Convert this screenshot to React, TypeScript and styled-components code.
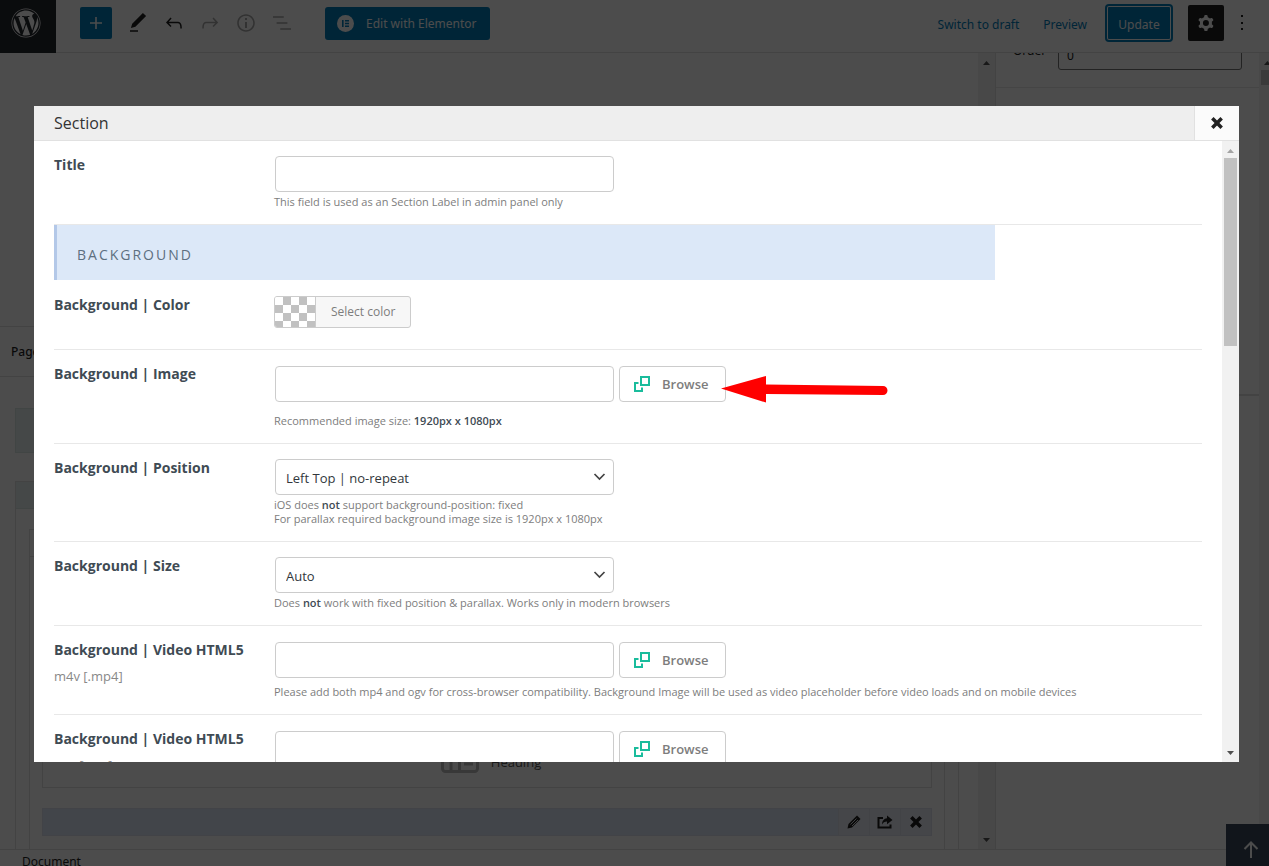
import React from "react";
import styled, { createGlobalStyle } from "styled-components";
import { FaWordpress } from "react-icons/fa";

const GlobalStyle = createGlobalStyle`
  *, *::before, *::after { box-sizing: border-box; }
  body {
    margin: 0;
    background: #fff;
    font-family: "Open Sans", "Noto Sans", sans-serif;
    font-size: 13px;
    color: #1e1e1e;
  }
  button, input, select { font-family: inherit; font-size: inherit; margin: 0; }
`;

const Editor = styled.div`
  position: relative;
  display: grid;
  grid-template-rows: 53px minmax(0, 1fr) 17px;
  height: 100vh;
  overflow: hidden;
  font-family: "Noto Sans", "Open Sans", sans-serif;
  font-size: 12px;
`;

/* ---------- top bar ---------- */

const TopBar = styled.header`
  display: flex;
  align-items: flex-start;
  border-bottom: 1px solid #e0e0e0;
`;

const HomeLink = styled.a`
  display: flex;
  justify-content: center;
  width: 56px;
  height: 53px;
  padding: 8px 4px 0 0;
  background: #23282d;
  color: #fff;
`;

const ToolGroup = styled.div`
  display: flex;
  align-items: center;
  height: 46px;
  padding-left: 24px;
`;

const ActionGroup = styled.div`
  display: flex;
  align-items: center;
  height: 46px;
  margin-left: auto;
  padding-right: 9px;
`;

const InsertButton = styled.button`
  display: grid;
  place-items: center;
  width: 32px;
  height: 32px;
  margin-right: 8px;
  padding: 0;
  border: 0;
  border-radius: 2px;
  background: #007cba;
  color: #fff;
`;

const ToolButton = styled.button<{ $faded?: boolean; $pressed?: boolean }>`
  display: grid;
  place-items: center;
  width: 36px;
  height: 36px;
  padding: 0;
  border: 0;
  border-radius: 2px;
  background: ${(p) => (p.$pressed ? "#1e1e1e" : "transparent")};
  color: ${(p) => (p.$pressed ? "#fff" : p.$faded ? "#a8a8a8" : "#1e1e1e")};
`;

const ElementorButton = styled.button`
  display: flex;
  align-items: center;
  gap: 12px;
  width: 165px;
  height: 33px;
  margin-left: 25px;
  padding: 0 0 0 12px;
  border: 0;
  border-radius: 3px;
  background: #007cba;
  color: #fff;
  white-space: nowrap;
`;

const TextAction = styled.button`
  padding: 2px 0 0;
  margin-right: 24px;
  border: 0;
  background: none;
  color: #007cba;
`;

const UpdateButton = styled.button`
  width: 64px;
  height: 34px;
  margin: 0 17px 0 -4px;
  padding: 2px 0 0;
  border: 0;
  border-radius: 2px;
  background: #007cba;
  color: #fff;
  box-shadow: inset 0 0 0 1px #fff, 0 0 0 2px #007cba;
`;

/* ---------- workspace behind the dialog ---------- */

const Workspace = styled.div`
  display: grid;
  grid-template-columns: minmax(0, 1fr) 17px 264px 10px;
  min-height: 0;
`;

const Canvas = styled.main`
  overflow: hidden;
  display: flex;
  flex-direction: column;
  padding-top: 273px;
  & > * { flex: none; }
`;

const OptionsBar = styled.div`
  display: flex;
  align-items: center;
  height: 51px;
  margin-bottom: 31px;
  padding-left: 11px;
  border: solid #e0e0e0;
  border-width: 1px 0;
  font-weight: 500;
`;

const BuilderTools = styled.div`
  height: 45px;
  margin: 0 19px 28px 15px;
  border: 1px solid #dbe6e5;
  background: #e8f2f1;
`;

const BuilderSection = styled.section`
  margin: 0 19px 0 15px;
  border: 1px solid #e0e0e0;
`;

const SectionBar = styled.div`
  height: 27px;
  border-bottom: 1px solid #dbe6e5;
  background: #e8f2f1;
`;

const WrapBox = styled.div`
  height: 400px;
  margin: 20px 13px;
  border: 1px solid #e0e0e0;
`;

const WrapBar = styled.div`
  height: 27px;
  border-bottom: 1px solid #e0e0e0;
`;

const BuilderItem = styled.div`
  display: flex;
  justify-content: center;
  align-items: flex-end;
  gap: 12px;
  height: 219px;
  margin: 12px 12px 20px;
  padding: 0 0 14px 8px;
  border: 1px solid #e0e0e0;
  color: #555;
  font-family: "Open Sans", sans-serif;
  font-size: 13px;
  line-height: 22px;
`;

const ItemBar = styled.div`
  display: flex;
  justify-content: flex-end;
  height: 28px;
  margin: 0 12px;
  border: 1px solid #dce2ef;
  background: #dce7f7;
`;

const ItemButton = styled.button`
  display: grid;
  place-items: center;
  width: 31px;
  padding: 0;
  border: 0;
  border-left: 1px solid #dcdfe9;
  background: #e7eaf3;
  color: #1e1e1e;
`;

const Sidebar = styled.aside`
  border-left: 1px solid #e0e0e0;
  overflow: hidden;
`;

const OrderRow = styled.div`
  display: flex;
  align-items: flex-end;
  justify-content: space-between;
  height: 35px;
  padding: 0 17px 17px 17px;
  border-bottom: 1px solid #e6e6e6;
`;

const OrderLabel = styled.label`
  padding-bottom: 11px;
  line-height: 16px;
`;

const OrderInput = styled.input`
  flex: none;
  width: 184px;
  height: 30px;
  padding: 0 8px;
  border: 1px solid #757575;
  border-radius: 3px;
  background: #fff;
  color: #1e1e1e;
`;

const SidebarPanel = styled.div`
  height: 308px;
  border-bottom: 2px solid #e0e0e0;
`;

const Footer = styled.footer`
  padding: 3px 22px 0;
  border-top: 1px solid #e0e0e0;
  overflow: hidden;
  line-height: 18px;
  white-space: nowrap;
`;

const ToTopButton = styled.button`
  position: absolute;
  right: 0;
  bottom: 0;
  display: grid;
  place-items: center;
  width: 43px;
  height: 42px;
  padding: 8px 0 0 7px;
  border: 0;
  background: #39495d;
  color: #fff;
`;

/* ---------- scroll bars ---------- */

const Track = styled.div`
  display: flex;
  flex-direction: column;
  align-items: center;
  width: 17px;
  height: 100%;
  background: #f1f1f1;
  svg { flex: none; }
`;

const Rail = styled.div`
  flex: 1;
  width: 13px;
`;

const Thumb = styled.div<{ $share: number }>`
  height: ${(p) => p.$share}%;
  background: #c1c1c1;
`;

const ClippedTrack = styled.div`
  overflow: hidden;
`;

/* ---------- dialog ---------- */

const Backdrop = styled.div`
  position: fixed;
  inset: 0;
  background: rgba(0, 0, 0, 0.7);
`;

const Dialog = styled.div`
  position: fixed;
  inset: 106px 30px 104px 34px;
  display: flex;
  flex-direction: column;
  background: #fff;
`;

const DialogHeader = styled.div`
  display: flex;
  align-items: center;
  flex: none;
  height: 35px;
  padding-left: 20px;
  border-bottom: 1px solid #e1e1e1;
  background: #eee;
`;

const DialogTitle = styled.h2`
  flex: 1;
  margin: 0;
  font-size: 16px;
  font-weight: 400;
  line-height: 22px;
  color: #333;
`;

const CloseButton = styled.button`
  display: grid;
  place-items: center;
  width: 45px;
  height: 34px;
  padding: 0;
  border: 0;
  border-left: 1px solid #e1e1e1;
  background: #fbfbfb;
  color: #222;
`;

const DialogBody = styled.div`
  display: flex;
  flex: 1;
  min-height: 0;
`;

const Form = styled.form`
  flex: 1;
  min-width: 0;
  overflow: hidden;
  padding: 0 20px;
`;

const Row = styled.div<{ $line?: "none" | "clear" }>`
  display: grid;
  grid-template-columns: 220px minmax(0, 1fr);
  padding: 15px 0;
  border-top: ${(p) =>
    p.$line === "none" ? "0" : p.$line === "clear" ? "1px solid transparent" : "1px solid #e8e8e8"};
`;

const Name = styled.div`
  line-height: 18px;
`;

const FieldLabel = styled.label`
  display: block;
  font-size: 14px;
  line-height: 17px;
  font-weight: 700;
  color: #3f4b54;
`;

const SubLabel = styled.div`
  margin-top: 9px;
  color: #888;
`;

const Control = styled.div<{ $drop?: boolean }>`
  display: flex;
  align-items: flex-start;
  gap: 5px;
  padding: ${(p) => (p.$drop ? 1 : 0)}px 0 0 1px;
`;

const TextInput = styled.input`
  width: 339px;
  height: 36px;
  padding: 0 10px;
  border: 1px solid #ccc;
  border-radius: 4px;
  background: #fff;
`;

const SelectBox = styled.div`
  position: relative;
  width: 339px;
  svg {
    position: absolute;
    right: 8px;
    top: 12px;
    pointer-events: none;
  }
`;

const Select = styled.select`
  appearance: none;
  width: 100%;
  height: 36px;
  padding: 2px 10px 0;
  border: 1px solid #ccc;
  border-radius: 4px;
  background: #fff;
  color: #32373c;
`;

const BrowseBox = styled.div`
  position: relative;
`;

const BrowseButton = styled.button`
  display: flex;
  align-items: center;
  gap: 12px;
  width: 107px;
  height: 36px;
  padding: 0 0 0 13px;
  border: 1px solid #ccc;
  border-radius: 4px;
  background: #fff;
  color: #7d7d7d;
  font-weight: 600;
`;

const Pointer = styled.svg`
  position: absolute;
  left: calc(100% - 5px);
  top: 9px;
`;

const Help = styled.div<{ $gap?: number }>`
  margin-top: ${(p) => p.$gap ?? 3}px;
  font-size: 11px;
  line-height: 14px;
  color: #7d7d7d;
  b { font-weight: 600; color: #3f4b54; }
`;

const Banner = styled.h3`
  width: 82%;
  height: 55px;
  margin: 0;
  padding: 20px 20px 0;
  border-left: 3px solid #b3c8e8;
  background: #dce8f8;
  color: #5d6f80;
  font-size: 14px;
  font-weight: 400;
  line-height: 20px;
  letter-spacing: 2px;
`;

const BannerRow = styled.div`
  border-top: 1px solid #e8e8e8;
`;

const ColorButton = styled.button`
  display: flex;
  height: 32px;
  margin-bottom: 6px;
  padding: 0;
  border: 1px solid #ccc;
  border-radius: 3px;
  overflow: hidden;
  background: #f7f7f7;
  color: #7d7d7d;
  font-size: 12px;
  line-height: 30px;
`;

const Swatch = styled.span`
  width: 41px;
  border-right: 1px solid #ccc;
  background: repeating-conic-gradient(#c1c1c1 0 25%, #fff 0 50%) 0 0 / 16px 16px;
`;

const ColorText = styled.span`
  padding: 0 15px;
`;

/* ---------- drawings ---------- */

const Glyph = ({ d, size = 24 }: { d: string; size?: number }) => (
  <svg width={size} height={size} viewBox="0 0 24 24" fill="currentColor" fillRule="evenodd" aria-hidden>
    <path d={d} />
  </svg>
);

const icons = {
  edit: "M20.1 5.1L16.9 2 6.2 12.7l-1.3 4.4 4.5-1.3L20.1 5.1zM4 20.8h8v-1.5H4v1.5z",
  undo: "M18.3 11.7c-.6-.6-1.4-.9-2.3-.9H6.7l2.9-3.3-1.1-1-4.5 5L8.5 16l1-1-2.7-2.7H16c.5 0 .9.2 1.3.5 1 1 1 3.4 1 4.5v.3h1.5v-.2c0-1.5 0-4.3-1.5-5.7z",
  redo: "M15.6 6.5l-1.1 1 2.9 3.3H8c-.9 0-1.7.3-2.3.9-1.4 1.5-1.4 4.2-1.4 5.6v.2h1.5v-.3c0-1.1 0-3.5 1-4.5.3-.3.7-.5 1.3-.5h9.2L14.5 15l1.1 1.1 4.6-4.6-4.6-5z",
  info: "M12 3.2c-4.8 0-8.8 3.9-8.8 8.8 0 4.8 3.9 8.8 8.8 8.8 4.8 0 8.8-3.9 8.8-8.8 0-4.8-4-8.8-8.8-8.8zm0 16c-4 0-7.2-3.3-7.2-7.2C4.8 8 8 4.8 12 4.8s7.2 3.3 7.2 7.2c0 4-3.2 7.2-7.2 7.2zM11 17h2v-6h-2v6zm0-8h2V7h-2v2z",
  list: "M13.8 5.2H3v1.5h10.8V5.2zm-3.6 12v1.5H21v-1.5H10.2zm7.2-6H6.6v1.5h10.8v-1.5z",
  cog: "M10.289 4.836A1 1 0 0111.275 4h1.306a1 1 0 01.987.836l.244 1.466c.787.26 1.503.679 2.108 1.218l1.393-.522a1 1 0 011.216.437l.653 1.13a1 1 0 01-.23 1.273l-1.148.944a6.025 6.025 0 010 2.435l1.149.946a1 1 0 01.23 1.272l-.653 1.13a1 1 0 01-1.216.437l-1.394-.522c-.605.54-1.32.958-2.108 1.218l-.244 1.466a1 1 0 01-.987.836h-1.306a1 1 0 01-.986-.836l-.244-1.466a5.995 5.995 0 01-2.108-1.218l-1.394.522a1 1 0 01-1.217-.436l-.653-1.131a1 1 0 01.23-1.272l1.149-.946a6.026 6.026 0 010-2.435l-1.148-.944a1 1 0 01-.23-1.272l.653-1.131a1 1 0 011.217-.437l1.393.522a5.994 5.994 0 012.108-1.218l.244-1.466zM14.929 12a3 3 0 11-6 0 3 3 0 016 0z",
  more: "M11 4h2v2h-2zM11 11h2v2h-2zM11 17h2v2h-2z",
  plus: "M11.2 6h1.6v5.2H18v1.6h-5.2V18h-1.6v-5.2H6v-1.6h5.2z",
};

const ElementorMark = () => (
  <svg width="17" height="17" viewBox="0 0 17 17" aria-hidden>
    <circle cx="8.500" cy="8.500" r="8.500" fill="#fff" />
    <path d="M5 5h1.600v7H5zM8 5h4v1.400H8zM8 7.800h4v1.400H8zM8 10.600h4V12H8z" fill="#007cba" />
  </svg>
);

const Cross = ({ size }: { size: number }) => (
  <svg width={size} height={size} viewBox="0 0 12 12" aria-hidden>
    <path d="M2 2l8 8M10 2l-8 8" stroke="currentColor" strokeWidth="3" />
  </svg>
);

const Squares = () => (
  <svg width="17" height="17" viewBox="0 0 17 17" fill="none" stroke="#1abc9c" strokeWidth="2" aria-hidden>
    <path d="M8 1h8v8H8z" />
    <path d="M5.500 7H2v8h7v-3.500" />
  </svg>
);

const Chevron = () => (
  <svg width="13" height="12" viewBox="0 0 13 12" fill="none" stroke="#444" strokeWidth="1.700" aria-hidden>
    <path d="M1.500 3l5 5 5-5" />
  </svg>
);

const PencilIcon = () => (
  <svg width="14" height="14" viewBox="0 0 14 14" aria-hidden>
    <path d="M10 .5L13.500 4 5 12.500.5 13.500 1.500 9z" fill="currentColor" />
    <path d="M3.500 9.500L9.500 3.500M5 11L11 5" stroke="#e7eaf3" strokeWidth=".9" />
  </svg>
);

const ShareIcon = () => (
  <svg width="16" height="14" viewBox="0 0 16 14" aria-hidden>
    <path d="M6 3H1.500v9.500h12V9.500" fill="none" stroke="currentColor" strokeWidth="2" />
    <path d="M10 .5L15.500 5 10 9.200V6.500C7.500 6.500 6 7.500 5 9.500 5 6 7 3.500 10 3.200z" fill="currentColor" />
  </svg>
);

const HeadingIcon = () => (
  <svg width="38" height="30" viewBox="0 0 38 30" fill="none" stroke="#bbb" strokeWidth="3" aria-hidden>
    <rect x="1.500" y="1.500" width="35" height="27" rx="3" />
    <path d="M10 2v26M18.500 2v26M23 13h9M23 21h9" />
  </svg>
);

const UpArrow = () => (
  <svg width="16" height="17" viewBox="0 0 16 17" fill="none" stroke="currentColor" strokeWidth="2" aria-hidden>
    <path d="M8 17V2M1.500 8L8 1.500 14.500 8" />
  </svg>
);

const ScrollArrow = ({ down, color }: { down?: boolean; color: string }) => (
  <svg width="17" height="17" viewBox="0 0 17 17" aria-hidden>
    <path d={down ? "M5 6h7l-3.500 4z" : "M5 12h7L8.500 8z"} fill={color} />
  </svg>
);

const ScrollBar = ({ share, topColor = "#505050" }: { share: number; topColor?: string }) => (
  <Track>
    <ScrollArrow color={topColor} />
    <Rail>
      <Thumb $share={share} />
    </Rail>
    <ScrollArrow down color="#505050" />
  </Track>
);

const Browse = ({ children }: { children?: React.ReactNode }) => (
  <BrowseBox>
    <BrowseButton type="button">
      <Squares />
      Browse
    </BrowseButton>
    {children}
  </BrowseBox>
);

export default function App() {
  return (
    <>
      <GlobalStyle />
      <Editor>
        <TopBar>
          <HomeLink href="#" aria-label="View posts">
            <FaWordpress size={30} />
          </HomeLink>
          <ToolGroup>
            <InsertButton aria-label="Add block"><Glyph d={icons.plus} /></InsertButton>
            <ToolButton aria-label="Tools"><Glyph d={icons.edit} /></ToolButton>
            <ToolButton aria-label="Undo"><Glyph d={icons.undo} /></ToolButton>
            <ToolButton aria-label="Redo" $faded><Glyph d={icons.redo} /></ToolButton>
            <ToolButton aria-label="Details" $faded><Glyph d={icons.info} /></ToolButton>
            <ToolButton aria-label="Outline" $faded><Glyph d={icons.list} /></ToolButton>
            <ElementorButton>
              <ElementorMark />
              Edit with Elementor
            </ElementorButton>
          </ToolGroup>
          <ActionGroup>
            <TextAction>Switch to draft</TextAction>
            <TextAction>Preview</TextAction>
            <UpdateButton>Update</UpdateButton>
            <ToolButton aria-label="Settings" $pressed><Glyph d={icons.cog} /></ToolButton>
            <ToolButton aria-label="Options"><Glyph d={icons.more} /></ToolButton>
          </ActionGroup>
        </TopBar>

        <Workspace>
          <Canvas>
            <OptionsBar>Page Options</OptionsBar>
            <BuilderTools />
            <BuilderSection>
              <SectionBar />
              <WrapBox>
                <WrapBar />
                <BuilderItem>
                  <HeadingIcon />
                  Heading
                </BuilderItem>
                <ItemBar>
                  <ItemButton aria-label="Edit item"><PencilIcon /></ItemButton>
                  <ItemButton aria-label="Export item"><ShareIcon /></ItemButton>
                  <ItemButton aria-label="Delete item"><Cross size={14} /></ItemButton>
                </ItemBar>
              </WrapBox>
            </BuilderSection>
          </Canvas>
          <ScrollBar share={0} />
          <Sidebar>
            <OrderRow>
              <OrderLabel htmlFor="order">Order</OrderLabel>
              <OrderInput id="order" defaultValue="0" />
            </OrderRow>
            <SidebarPanel />
          </Sidebar>
          <ClippedTrack>
            <ScrollBar share={2} />
          </ClippedTrack>
        </Workspace>

        <Footer>Document</Footer>
        <ToTopButton aria-label="Back to top"><UpArrow /></ToTopButton>
      </Editor>

      <Backdrop />

      <Dialog role="dialog" aria-labelledby="dialog-title">
        <DialogHeader>
          <DialogTitle id="dialog-title">Section</DialogTitle>
          <CloseButton aria-label="Close"><Cross size={14} /></CloseButton>
        </DialogHeader>
        <DialogBody>
          <Form>
            <Row $line="none">
              <Name><FieldLabel htmlFor="title">Title</FieldLabel></Name>
              <div>
                <Control><TextInput id="title" /></Control>
                <Help>This field is used as an Section Label in admin panel only</Help>
              </div>
            </Row>
            <BannerRow>
              <Banner>BACKGROUND</Banner>
            </BannerRow>
            <Row $line="clear">
              <Name><FieldLabel htmlFor="bg-color">Background | Color</FieldLabel></Name>
              <div>
                <ColorButton type="button" id="bg-color">
                  <Swatch />
                  <ColorText>Select color</ColorText>
                </ColorButton>
              </div>
            </Row>
            <Row>
              <Name><FieldLabel htmlFor="bg-image">Background | Image</FieldLabel></Name>
              <div>
                <Control $drop>
                  <TextInput id="bg-image" />
                  <Browse>
                    <Pointer width="168" height="28" viewBox="0 0 168 28" aria-hidden>
                      <path d="M0 13.500L45 1v8.500l117 1.500a4.500 4.500 0 010 9L45 19v8.500z" fill="#f00" />
                    </Pointer>
                  </Browse>
                </Control>
                <Help $gap={12}>Recommended image size: <b>1920px x 1080px</b></Help>
              </div>
            </Row>
            <Row>
              <Name><FieldLabel htmlFor="bg-position">Background | Position</FieldLabel></Name>
              <div>
                <Control>
                  <SelectBox>
                    <Select id="bg-position"><option>Left Top | no-repeat</option></Select>
                    <Chevron />
                  </SelectBox>
                </Control>
                <Help>
                  iOS does <b>not</b> support background-position: fixed
                  <br />
                  For parallax required background image size is 1920px x 1080px
                </Help>
              </div>
            </Row>
            <Row>
              <Name><FieldLabel htmlFor="bg-size">Background | Size</FieldLabel></Name>
              <div>
                <Control>
                  <SelectBox>
                    <Select id="bg-size"><option>Auto</option></Select>
                    <Chevron />
                  </SelectBox>
                </Control>
                <Help>Does <b>not</b> work with fixed position &amp; parallax. Works only in modern browsers</Help>
              </div>
            </Row>
            <Row>
              <Name>
                <FieldLabel htmlFor="bg-mp4">Background | Video HTML5</FieldLabel>
                <SubLabel>m4v [.mp4]</SubLabel>
              </Name>
              <div>
                <Control $drop><TextInput id="bg-mp4" /><Browse /></Control>
                <Help $gap={7}>
                  Please add both mp4 and ogv for cross-browser compatibility. Background Image will be used as video
                  placeholder before video loads and on mobile devices
                </Help>
              </div>
            </Row>
            <Row>
              <Name>
                <FieldLabel htmlFor="bg-ogv">Background | Video HTML5</FieldLabel>
                <SubLabel>ogg [.ogv]</SubLabel>
              </Name>
              <div>
                <Control $drop><TextInput id="bg-ogv" /><Browse /></Control>
              </div>
            </Row>
          </Form>
          <ScrollBar share={32} topColor="#a3a3a3" />
        </DialogBody>
      </Dialog>
    </>
  );
}
